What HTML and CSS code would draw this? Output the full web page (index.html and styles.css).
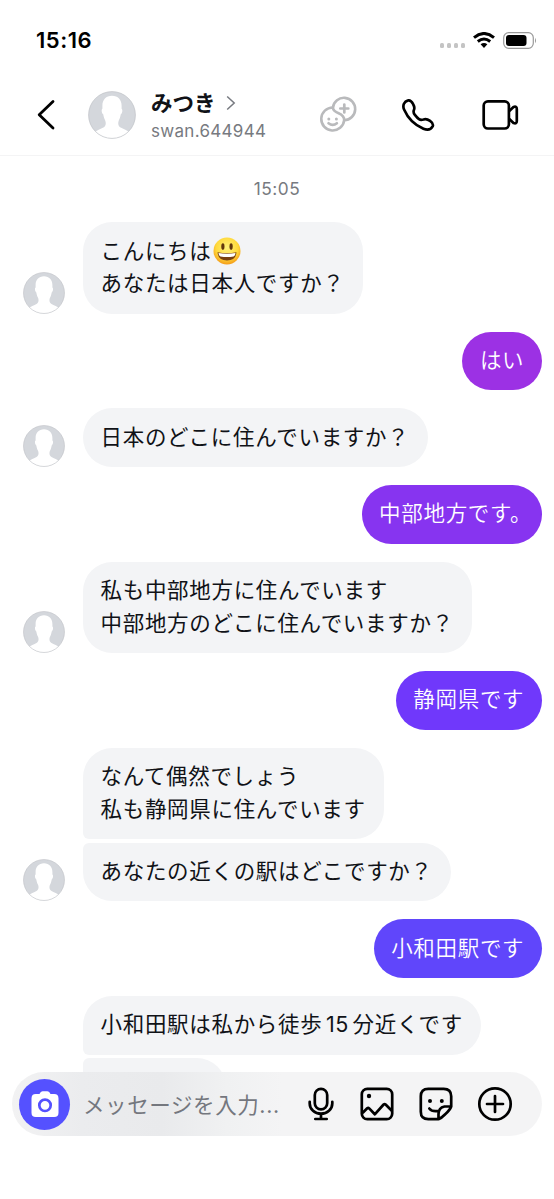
FILE: index.html
```
<!DOCTYPE html>
<html lang="ja">
<head>
<meta charset="utf-8">
<title>みつき</title>
<link rel="stylesheet" href="styles.css">
</head>
<body>
<svg class="defs" width="0" height="0">
  <symbol id="avatar" viewBox="0 0 48 48">
    <clipPath id="disc"><circle cx="24" cy="24" r="23.5"/></clipPath>
    <circle cx="24" cy="24" r="23.5" fill="#d4d7dc"/>
    <g clip-path="url(#disc)"><path fill="#fff" d="M24 4.800c6 0 9.600 4 9.600 10v3c1.200.5.9 4.700-.8 5.500-.5 3-1.300 4.700-2 6.200-1 2.500-.7 5.500 1.300 6.700 3.500 2 7 2.700 10.500 6.300V49H5.400v-6.500c3.500-3.600 7-4.300 10.500-6.300 2-1.200 2.300-4.200 1.300-6.700-.7-1.500-1.500-3.200-2-6.200-1.700-.8-2-5-.8-5.500v-3c0-6 3.600-10 9.600-10z"/></g>
    <circle cx="24" cy="24" r="23.400" fill="none" stroke="#bfc2c7" stroke-width=".9" opacity=".75"/>
  </symbol>
</svg>
<div class="screen">
  <div class="status">
    <span class="clock">15:16</span>
    <span class="dots"><i></i><i></i><i></i><i></i></span>
    <svg class="wifi" viewBox="0 0 22 16"><g fill="none" stroke="#000" stroke-width="3"><path d="M1 5.600Q11-2.600 21 5.600"/><path d="M4.800 9.500q6.200-4.900 12.400 0"/></g><path d="M7.600 12.300q3.400-2.500 6.800 0L11 15.900z"/></svg>
    <svg class="battery" viewBox="0 0 34 17"><rect x=".7" y=".7" width="29.600" height="15.600" rx="5" fill="none" stroke="#999" stroke-width="1.200"/><rect x="3" y="3" width="20.500" height="11" rx="3" fill="#000"/><path d="M32 5.700q2 2.800 0 5.600z" fill="#999"/></svg>
  </div>
  <header class="header">
    <svg class="back" viewBox="0 0 18 32"><path d="M16 2.500 2.200 15.700 16 29" fill="none" stroke="#000" stroke-width="2.800" stroke-linecap="round" stroke-linejoin="round"/></svg>
    <svg class="photo"><use href="#avatar"/></svg>
    <div class="who">
      <div class="name">みつき<svg viewBox="0 0 10 16"><path d="m1.200 1.500 7 6.500-7 6.500" fill="none" stroke="#777a80" stroke-width="1.500"/></svg></div>
      <div class="handle">swan.644944</div>
    </div>
    <div class="actions">
      <svg class="faces" viewBox="0 0 38 38" fill="none" stroke="#b9babc" stroke-width="2.600" stroke-linecap="round"><path d="M13.900 11.500A11.200 11.200 0 1 1 25.200 24.200"/><path d="M13.900 11.500A11.500 11.500 0 1 0 25.200 24.200C25.300 20.500 23 18.600 19.600 17.200 15.800 15.800 14 14 13.900 11.500z"/><path d="M25.300 8.500v8M21.300 12.500h8" stroke-width="2.700"/><path d="M9.500 27.200q4.200 3.400 8.400 0"/><g fill="#b9babc" stroke="none"><circle cx="9.800" cy="23" r="1.500"/><circle cx="17.400" cy="23" r="1.500"/></g></svg>
      <svg class="phone" viewBox="0 0 36 36" fill="none" stroke="#000" stroke-width="2.800" stroke-linejoin="round"><path d="M7.500 2.500c2.100-.6 3.500.8 5.200 4 1.700 3 1.500 4.400.8 6-.9 2.200-.6 3.200 1 5.200 1.300 1.700 2.900 3.500 4.300 4.400 1.700 1.200 2.600 1 4.700.3 2.500-.9 4-.5 6.800 1.500 2.900 2.100 3.800 3.500 2.700 5.700-1.800 3.300-4.800 4.600-9.600 2.500C14.700 28.400 7.300 21.400 3.200 12 1.400 7.800 3.200 3.500 7.500 2.500z"/></svg>
      <svg class="video" viewBox="0 0 37 32" fill="none" stroke="#000" stroke-width="2.700" stroke-linejoin="round"><rect x="1.700" y="2.400" width="25.200" height="27.100" rx="4.200"/><path d="M27 12.300 31.500 8q3.300-1.200 3.300 2v12q0 3.200-3.300 2L27 19.700"/></svg>
    </div>
  </header>
  <main class="chat">
    <div class="stamp">15:05</div>
    <div class="row"><svg class="mini"><use href="#avatar"/></svg><div class="bubble">こんにちは<svg class="emoji" viewBox="0 0 28 28"><defs><radialGradient id="skin" cx=".5" cy=".38" r=".62"><stop offset="0" stop-color="#fff17a"/><stop offset=".65" stop-color="#ffd93b"/><stop offset="1" stop-color="#f49b18"/></radialGradient></defs><circle cx="14" cy="14" r="13.500" fill="url(#skin)"/><ellipse cx="9.900" cy="9.600" rx="1.600" ry="3.300" fill="#63370c"/><ellipse cx="18.100" cy="9.600" rx="1.600" ry="3.300" fill="#63370c"/><path d="M4.500 15.300q9.500 1.900 19 0-.7 8.200-9.500 8.200t-9.500-8.200z" fill="#794010"/><path d="M5.500 15.900q8.500 1.500 17 0-.5 3.400-2 3.600-6.500 1-13 0-1.500-.2-2-3.600z" fill="#fff"/></svg><br>あなたは日本人ですか？</div></div>
    <div class="row own"><div class="bubble tone-a">はい</div></div>
    <div class="row"><svg class="mini"><use href="#avatar"/></svg><div class="bubble">日本のどこに住んでいますか？</div></div>
    <div class="row own"><div class="bubble tone-b">中部地方です<span class="stop">。</span></div></div>
    <div class="row"><svg class="mini"><use href="#avatar"/></svg><div class="bubble">私も中部地方に住んでいます<br>中部地方のどこに住んでいますか？</div></div>
    <div class="row own"><div class="bubble tone-c">静岡県です</div></div>
    <div class="row"><svg class="mini"><use href="#avatar"/></svg><div class="stack"><div class="bubble first">なんて偶然でしょう<br>私も静岡県に住んでいます</div><div class="bubble last">あなたの近くの駅はどこですか？</div></div></div>
    <div class="row own"><div class="bubble tone-d">小和田駅です</div></div>
    <div class="row"><div class="mini"></div><div class="stack"><div class="bubble first">小和田駅は私から徒歩<span class="num">15</span>分近くです</div><div class="bubble last partial"></div></div></div>
  </main>
  <footer class="composer">
    <div class="camera"><svg viewBox="0 0 28 26"><path fill="#fff" d="M9.200 1.800Q10 .3 11.600.3h4.800q1.600 0 2.400 1.500l.7 1.300h3.700q4.300 0 4.300 4.300v14.300q0 4.300-4.300 4.300H4.800Q.5 26 .5 21.700V7.400q0-4.300 4.300-4.300h3.700z"/><circle cx="14" cy="14.300" r="5.700" fill="none" stroke="#5551ff" stroke-width="2.700"/></svg></div>
    <span class="placeholder">メッセージを入力...</span>
    <div class="tools">
      <svg class="mic" viewBox="0 0 26 34" fill="none" stroke="#000" stroke-width="2.700" stroke-linecap="round"><rect x="6.800" y="1.800" width="12.400" height="20.600" rx="6.200"/><path d="M1.700 14.800v1.700a11.300 10.200 0 0 0 22.600 0v-1.700M13 26.700v5.300M7.300 32h11.400"/></svg>
      <svg class="pic" viewBox="0 0 34 34" fill="none" stroke="#000" stroke-width="2.700" stroke-linejoin="round"><rect x="1.800" y="1.800" width="30.400" height="30.400" rx="5.500"/><path d="m2.500 26 4.700-4.700q1-.8 2 .1l5.600 5.900 8.800-9.800q1-.8 2 0l6.200 6.200"/><circle cx="9" cy="9" r="2.200" fill="#000" stroke="none"/></svg>
      <svg class="sticker" viewBox="0 0 34 34" fill="none" stroke="#000" stroke-width="2.700" stroke-linejoin="round" stroke-linecap="round"><path d="M19.500 32.200H9.300q-7.500 0-7.500-7.500V9.300q0-7.500 7.500-7.500h15.400q7.500 0 7.500 7.500v10.200q-1.200 3.500-6 7.700-3.700 3.800-6.700 5zM19.500 32.200v-5q0-6.500 6-7.700h6.700M10.300 21.500c1.700 2.200 4.500 3.200 8.800 2.500"/><g fill="#000" stroke="none"><circle cx="11" cy="14" r="2"/><circle cx="22.800" cy="14" r="2"/></g></svg>
      <svg class="plus" viewBox="0 0 36 36" fill="none" stroke="#000" stroke-width="2.700" stroke-linecap="round"><circle cx="18" cy="18" r="15.700"/><path d="M18 10v16M10 18h16"/></svg>
    </div>
  </footer>
</div>
</body>
</html>
```
FILE: styles.css
```
* { box-sizing: border-box; }
body { margin: 0; background: #fff; font-family: Inter, "Noto Sans CJK JP", sans-serif; color: #101217; }
svg { display: block; flex: none; }
.defs { position: absolute; }
.screen { position: relative; width: 554px; height: 1199px; overflow: hidden; display: flex; flex-direction: column; background: #fff; }

.status { flex: none; height: 76px; padding: 4px 17px 0 36px; display: flex; align-items: center; }
.clock { font-size: 22px; letter-spacing: .5px; font-weight: 600; color: #000; margin-right: auto; line-height: 28px; }
.dots { display: flex; gap: 2.800px; padding-top: 11px; }
.dots i { width: 4.200px; height: 4.200px; border-radius: 1.500px; background: #c4c4c4; }
.wifi { width: 22px; height: 16px; margin: 0 8px 0 8px; }
.battery { width: 34px; height: 17px; }

.header { flex: none; height: 80px; padding: 0 35px 1px 37px; display: flex; align-items: center; border-bottom: 1px solid #f4f4f5; }
.back { width: 18px; height: 32px; }
.photo { width: 48px; height: 48px; margin-left: 33px; }
.who { margin-left: 15px; padding-top: 4px; }
.name { display: flex; align-items: center; gap: 10px; font-size: 21.500px; font-weight: 700; line-height: 28px; }
.name svg { width: 10px; height: 16px; }
.handle { font-size: 17px; letter-spacing: .3px; line-height: 28px; color: #777a80; }
.actions { margin-left: auto; display: flex; align-items: center; }
.faces { width: 38px; height: 38px; margin-right: 44px; }
.phone { width: 34.500px; height: 34.500px; margin-right: 46.500px; }
.video { width: 37px; height: 32px; }

.chat { flex: 1; min-height: 0; display: flex; flex-direction: column; gap: 17.900px; padding: 20px 12px 0 23px; }
.stamp { height: 28px; line-height: 26px; margin: 0 0 .500px -11px; text-align: center; font-size: 17.300px; letter-spacing: .5px; color: #777a80; }
.row { flex: none; display: flex; align-items: flex-end; gap: 18px; }
.own { justify-content: flex-end; }
.mini { flex: none; width: 42px; height: 42px; }
.stack { display: flex; flex-direction: column; align-items: flex-start; gap: 3.600px; }
.bubble { padding: 11.400px 18.200px 14.800px 17.500px; border-radius: 29.400px; background: #f3f4f6; font-size: 21.500px; letter-spacing: .690px; line-height: 32.600px; white-space: nowrap; font-family: "Noto Sans CJK JP", sans-serif; }
.own .bubble { color: #fff; font-weight: 350; padding-right: 17.700px; }
.bubble.first { border-bottom-left-radius: 6px; }
.bubble.last { border-top-left-radius: 6px; }
.partial { width: 143px; height: 58.800px; }
.stop { margin-right: -8px; }
.num { font-family: Inter, sans-serif; font-size: 21.500px; line-height: 1; margin: 0 3.500px; }
.emoji { display: inline-block; width: 28px; height: 28px; margin: -4px 0 -4px 1.500px; vertical-align: -2px; }
.tone-a { background: #9c31e4; }
.tone-b { background: #8734f0; }
.tone-c { background: #7038fb; }
.tone-d { background: #6046fb; }

.composer { position: absolute; left: 12px; right: 12px; bottom: 63px; height: 64px; border-radius: 32px; padding: 0 29px 0 7px; display: flex; align-items: center; background: linear-gradient(90deg, #f2f2f3 0, #ebecee 70px, #e9eaec 150px, #f0f1f2 215px, #f4f4f5 270px); }
.camera { width: 51px; height: 51px; border-radius: 50%; background: #5551ff; display: grid; place-items: center; }
.camera svg { width: 28px; height: 26px; }
.placeholder { margin-left: 13px; margin-top: -2px; font-size: 21.500px; letter-spacing: .6px; color: #74777e; white-space: nowrap; }
.tools { margin-left: auto; display: flex; align-items: center; }
.mic { width: 26px; height: 34px; margin-right: 26px; }
.pic { width: 34px; height: 34px; margin-right: 25px; }
.sticker { width: 34px; height: 34px; margin-right: 24px; }
.plus { width: 36px; height: 36px; }
```
